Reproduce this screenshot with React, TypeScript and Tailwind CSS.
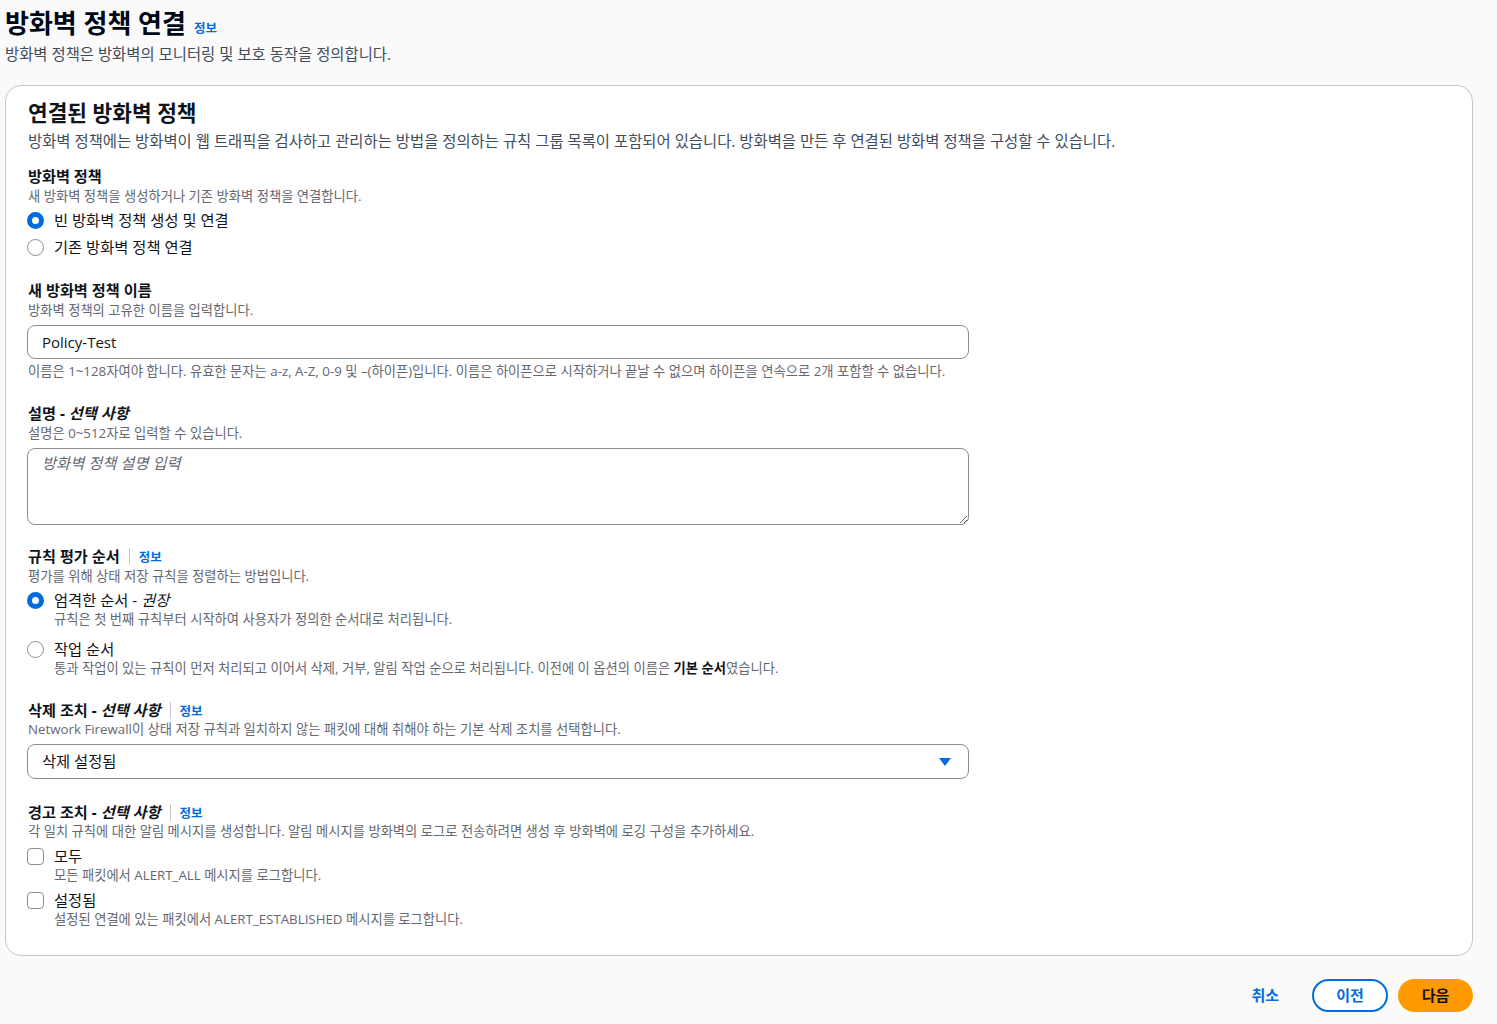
import type { ReactNode } from "react";

const font = "font-['Open_Sans','Noto_Sans_CJK_KR',sans-serif]";

function InfoLink({ sep = true }: { sep?: boolean }) {
  return (
    <>
      {sep ? <span className="mx-[9px] inline-block h-[17px] w-px self-center bg-[#c6c6cd]" /> : null}
      <a className="text-[12.5px] font-bold leading-[16px] text-[#006ce0]" href="#">
        정보
      </a>
    </>
  );
}

function Label({ children, className = "" }: { children: ReactNode; className?: string }) {
  return (
    <div className={`flex h-[22px] items-baseline text-[15.2px] font-bold leading-[22px] text-[#0f141a] ${className}`}>
      {children}
    </div>
  );
}

function Desc({ children, className = "" }: { children: ReactNode; className?: string }) {
  return <div className={`text-[13.3px] leading-[16px] text-[#656871] ${className}`}>{children}</div>;
}

function Radio({ checked, children }: { checked?: boolean; children: ReactNode }) {
  return (
    <div className="-ml-px flex h-[22px] items-center gap-[10px] text-[15.3px] text-[#0f141a]">
      <span
        className={
          checked
            ? "h-[17px] w-[17px] shrink-0 rounded-full border-[5px] border-[#006ce0] bg-white"
            : "h-[17px] w-[17px] shrink-0 rounded-full border-[1.5px] border-[#8c8c94] bg-white"
        }
      />
      <span>{children}</span>
    </div>
  );
}

function Check({ children }: { children: ReactNode }) {
  return (
    <div className="-ml-px flex h-[22px] items-center gap-[10px] text-[15.3px] text-[#0f141a]">
      <span className="h-[17px] w-[17px] shrink-0 rounded-[4px] border-[1.5px] border-[#8c8c94] bg-white" />
      <span>{children}</span>
    </div>
  );
}

export default function App() {
  return (
    <div className={`min-h-[1024px] bg-[#fafafa] pl-[5px] pr-[24px] ${font}`}>
      <div className="flex items-baseline gap-[8px] pt-[6px]">
        <h1 className="text-[26px] font-bold leading-[34px] text-[#000716]">방화벽 정책 연결</h1>
        <InfoLink sep={false} />
      </div>
      <p className="mt-[5px] text-[15.4px] leading-[20px] text-[#414d5c]">
        방화벽 정책은 방화벽의 모니터링 및 보호 동작을 정의합니다.
      </p>

      <section className="mt-[20px] rounded-[16px] border border-[#c6c6cd] bg-white px-[22px] pb-[28px] pt-[13px]">
        <h2 className="text-[21.4px] font-bold leading-[28px] text-[#0f141a]">연결된 방화벽 정책</h2>
        <p className="mt-[5px] text-[15.4px] leading-[20px] text-[#414d5c]">
          방화벽 정책에는 방화벽이 웹 트래픽을 검사하고 관리하는 방법을 정의하는 규칙 그룹 목록이 포함되어 있습니다. 방화벽을 만든 후 연결된 방화벽 정책을 구성할 수 있습니다.
        </p>

        <Label className="mt-[13px]">방화벽 정책</Label>
        <Desc className="mt-[1px]">새 방화벽 정책을 생성하거나 기존 방화벽 정책을 연결합니다.</Desc>
        <div className="mt-[5px] flex flex-col gap-[5px]">
          <Radio checked>빈 방화벽 정책 생성 및 연결</Radio>
          <Radio>기존 방화벽 정책 연결</Radio>
        </div>

        <Label className="mt-[21px]">새 방화벽 정책 이름</Label>
        <Desc className="mt-[1px]">방화벽 정책의 고유한 이름을 입력합니다.</Desc>
        <div className="-ml-px mt-[7px] flex h-[34px] w-[942px] items-center rounded-[8px] border border-[#8c8c94] pl-[14px] text-[15px] text-[#0f141a]">
          Policy-Test
        </div>
        <Desc className="mt-[4px]">
          이름은 1~128자여야 합니다. 유효한 문자는 a-z, A-Z, 0-9 및 –(하이픈)입니다. 이름은 하이픈으로 시작하거나 끝날 수 없으며 하이픈을 연속으로 2개 포함할 수 없습니다.
        </Desc>

        <Label className="mt-[23px]">
          설명 - <i className="ml-[4px]">선택 사항</i>
        </Label>
        <Desc className="mt-[1px]">설명은 0~512자로 입력할 수 있습니다.</Desc>
        <textarea
          className="-ml-px mt-[7px] block h-[77px] w-[942px] rounded-[8px] border border-[#8c8c94] px-[14px] py-[3px] text-[15.3px] leading-[22px] text-[#0f141a] outline-none placeholder:italic placeholder:text-[#656871]"
          placeholder="방화벽 정책 설명 입력"
        />

        <Label className="mt-[20px]">
          규칙 평가 순서
          <InfoLink />
        </Label>
        <Desc className="mt-[1px]">평가를 위해 상태 저장 규칙을 정렬하는 방법입니다.</Desc>
        <div className="mt-[5px]">
          <Radio checked>
            엄격한 순서 - <i>권장</i>
          </Radio>
          <Desc className="pl-[26px]">규칙은 첫 번째 규칙부터 시작하여 사용자가 정의한 순서대로 처리됩니다.</Desc>
        </div>
        <div className="mt-[11px]">
          <Radio>작업 순서</Radio>
          <Desc className="pl-[26px]">
            통과 작업이 있는 규칙이 먼저 처리되고 이어서 삭제, 거부, 알림 작업 순으로 처리됩니다. 이전에 이 옵션의 이름은{" "}
            <b className="text-[#0f141a]">기본 순서</b>였습니다.
          </Desc>
        </div>

        <Label className="mt-[23px]">
          삭제 조치 - <i className="ml-[4px]">선택 사항</i>
          <InfoLink />
        </Label>
        <Desc>Network Firewall이 상태 저장 규칙과 일치하지 않는 패킷에 대해 취해야 하는 기본 삭제 조치를 선택합니다.</Desc>
        <div className="-ml-px mt-[7px] flex h-[35px] w-[942px] items-center justify-between rounded-[8px] border border-[#8c8c94] pl-[14px] pr-[17px] text-[15.3px] text-[#0f141a]">
          <span>삭제 설정됨</span>
          <svg width="12" height="8" viewBox="0 0 12 8">
            <path d="M0 0h12L6 8z" fill="#006ce0" />
          </svg>
        </div>

        <Label className="mt-[22px]">
          경고 조치 - <i className="ml-[4px]">선택 사항</i>
          <InfoLink />
        </Label>
        <Desc>각 일치 규칙에 대한 알림 메시지를 생성합니다. 알림 메시지를 방화벽의 로그로 전송하려면 생성 후 방화벽에 로깅 구성을 추가하세요.</Desc>
        <div className="mt-[6px]">
          <Check>모두</Check>
          <Desc className="pl-[26px]">모든 패킷에서 ALERT_ALL 메시지를 로그합니다.</Desc>
        </div>
        <div className="mt-[6px]">
          <Check>설정됨</Check>
          <Desc className="pl-[26px]">설정된 연결에 있는 패킷에서 ALERT_ESTABLISHED 메시지를 로그합니다.</Desc>
        </div>
      </section>

      <div className="mt-[23px] flex items-center justify-end">
        <button className="mr-[33px] text-[15px] font-bold text-[#006ce0]">취소</button>
        <button className="mr-[10px] h-[33px] w-[76px] rounded-full border-2 border-[#006ce0] bg-white text-[15px] font-bold text-[#006ce0]">
          이전
        </button>
        <button className="h-[33px] w-[75px] rounded-full bg-[#ff9900] text-[15px] font-bold text-[#0f141a]">다음</button>
      </div>
    </div>
  );
}
